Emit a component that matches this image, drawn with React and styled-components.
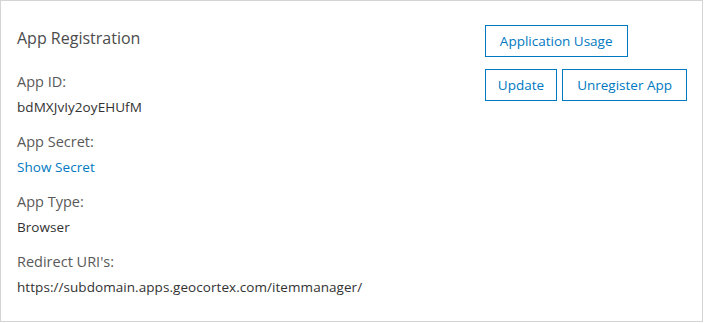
import styled, { createGlobalStyle } from 'styled-components';

const GlobalStyle = createGlobalStyle`
  body {
    margin: 0;
    background: #fff;
    font-family: "Open Sans", "Noto Sans", sans-serif;
  }
`;

const StyledPanel = styled.div`
  box-sizing: border-box;
  width: 703px;
  height: 322px;
  border: 1px solid #d4d4d4;
  background: #fff;
  display: flex;
  justify-content: space-between;
  padding: 24px 15px 0 16px;
`;

const StyledInfo = styled.div`
  display: flex;
  flex-direction: column;
  padding-top: 1px;
`;

const StyledTitle = styled.h2`
  margin: 0 0 22px;
  font-size: 16px;
  line-height: 24px;
  font-weight: 400;
  color: #4c4c4c;
`;

const StyledItem = styled.div`
  margin-bottom: 15px;
`;

const StyledLabel = styled.div`
  font-size: 14.5px;
  line-height: 20px;
  color: #595959;
  margin-bottom: 5px;
`;

const StyledValue = styled.div`
  font-size: 13.5px;
  line-height: 20px;
  letter-spacing: 0.06px;
  color: ${({ $link }) => ($link ? '#0079c1' : '#323232')};
  cursor: ${({ $link }) => ($link ? 'pointer' : 'default')};
`;

const StyledActions = styled.div`
  display: flex;
  flex-direction: column;
  align-items: flex-start;
  gap: 12px;
`;

const StyledButtonRow = styled.div`
  display: flex;
  gap: 5px;
`;

const StyledButton = styled.button`
  box-sizing: border-box;
  height: 32px;
  padding: 0 ${({ $pad }) => $pad || 13}px;
  border: 1px solid #0079c1;
  background: #fff;
  color: #0079c1;
  font-family: "Open Sans", "Noto Sans", sans-serif;
  font-size: 13.5px;
  cursor: pointer;
`;

const items = [
  { label: 'App ID:', value: 'bdMXJvIy2oyEHUfM' },
  { label: 'App Secret:', value: 'Show Secret', link: true },
  { label: 'App Type:', value: 'Browser' },
  { label: "Redirect URI's:", value: 'https://subdomain.apps.geocortex.com/itemmanager/' }
];

const App = () => {
  return (
    <>
      <GlobalStyle />
      <StyledPanel>
        <StyledInfo>
          <StyledTitle>App Registration</StyledTitle>
          {items.map((item) => (
            <StyledItem key={item.label}>
              <StyledLabel>{item.label}</StyledLabel>
              <StyledValue $link={item.link}>{item.value}</StyledValue>
            </StyledItem>
          ))}
        </StyledInfo>
        <StyledActions>
          <StyledButton $pad={14}>Application Usage</StyledButton>
          <StyledButtonRow>
            <StyledButton $pad={12}>Update</StyledButton>
            <StyledButton $pad={14}>Unregister App</StyledButton>
          </StyledButtonRow>
        </StyledActions>
      </StyledPanel>
    </>
  );
};

export default App;
